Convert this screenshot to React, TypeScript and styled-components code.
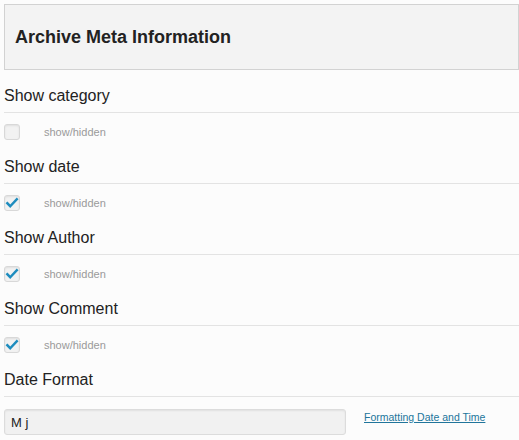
import React from "react";
import styled, { createGlobalStyle } from "styled-components";

const Global = createGlobalStyle`
  html, body { margin: 0; padding: 0; background: #fcfcfc; }
  body { font-family: "Liberation Sans", Arial, sans-serif; color: #222; }
`;

const Page = styled.div`
  margin-left: 4px;
  padding-top: 4px;
  width: 515px;
`;

const Header = styled.div`
  height: 64px;
  box-sizing: content-box;
  border: 1px solid #d2d2d2;
  background: #f3f3f3;
  display: flex;
  align-items: center;
  padding-left: 10px;
`;

const Title = styled.h2`
  margin: 0;
  font-size: 18px;
  font-weight: bold;
  color: #222;
  line-height: 22px;
`;

const Label = styled.div`
  font-size: 16px;
  line-height: 20px;
  padding: 16px 0 6px;
  border-bottom: 1px solid #e3e3e3;
  color: #222;
`;

const OptionRow = styled.div`
  display: flex;
  align-items: center;
  padding: 11px 0 1px;
  height: 16px;
`;

const Box = styled.span`
  width: 14px;
  height: 14px;
  border: 1px solid #d8d8d8;
  border-radius: 3px;
  background: #f2f2f2;
  box-shadow: inset 0 1px 2px rgba(0, 0, 0, 0.08);
  display: flex;
  align-items: center;
  justify-content: center;
`;

const Hint = styled.span`
  margin-left: 24px;
  font-size: 11px;
  color: #9a9a9a;
`;

const FieldRow = styled.div`
  display: flex;
  align-items: flex-start;
  padding-top: 12px;
`;

const Input = styled.input`
  box-sizing: border-box;
  width: 342px;
  height: 26px;
  border: 1px solid #dcdcdc;
  border-radius: 3px;
  background: #f1f1f1;
  box-shadow: inset 0 1px 2px rgba(0, 0, 0, 0.07);
  padding: 0 6px;
  font-family: "Liberation Sans", Arial, sans-serif;
  font-size: 13px;
  color: #222;
  outline: none;
`;

const Link = styled.a`
  margin-left: 18px;
  margin-top: 2px;
  font-size: 10.5px;
  color: #21759b;
  text-decoration: underline;
`;

const Check = () => (
  <svg width="14" height="14" viewBox="0 0 14 14">
    <path d="M2.3 7.2 L5.2 10.2 L11.8 3.2" fill="none" stroke="#1e8cbe" strokeWidth="2.4" strokeLinecap="square" />
  </svg>
);

const Checkbox = ({ checked }: { checked: boolean }) => <Box>{checked ? <Check /> : null}</Box>;

const items = [
  { label: "Show category", checked: false },
  { label: "Show date", checked: true },
  { label: "Show Author", checked: true },
  { label: "Show Comment", checked: true },
];

export default function App() {
  return (
    <>
      <Global />
      <Page>
        <Header>
          <Title>Archive Meta Information</Title>
        </Header>
        {items.map((it) => (
          <React.Fragment key={it.label}>
            <Label>{it.label}</Label>
            <OptionRow>
              <Checkbox checked={it.checked} />
              <Hint>show/hidden</Hint>
            </OptionRow>
          </React.Fragment>
        ))}
        <Label>Date Format</Label>
        <FieldRow>
          <Input defaultValue="M j" />
          <Link href="#">Formatting Date and Time</Link>
        </FieldRow>
      </Page>
    </>
  );
}
